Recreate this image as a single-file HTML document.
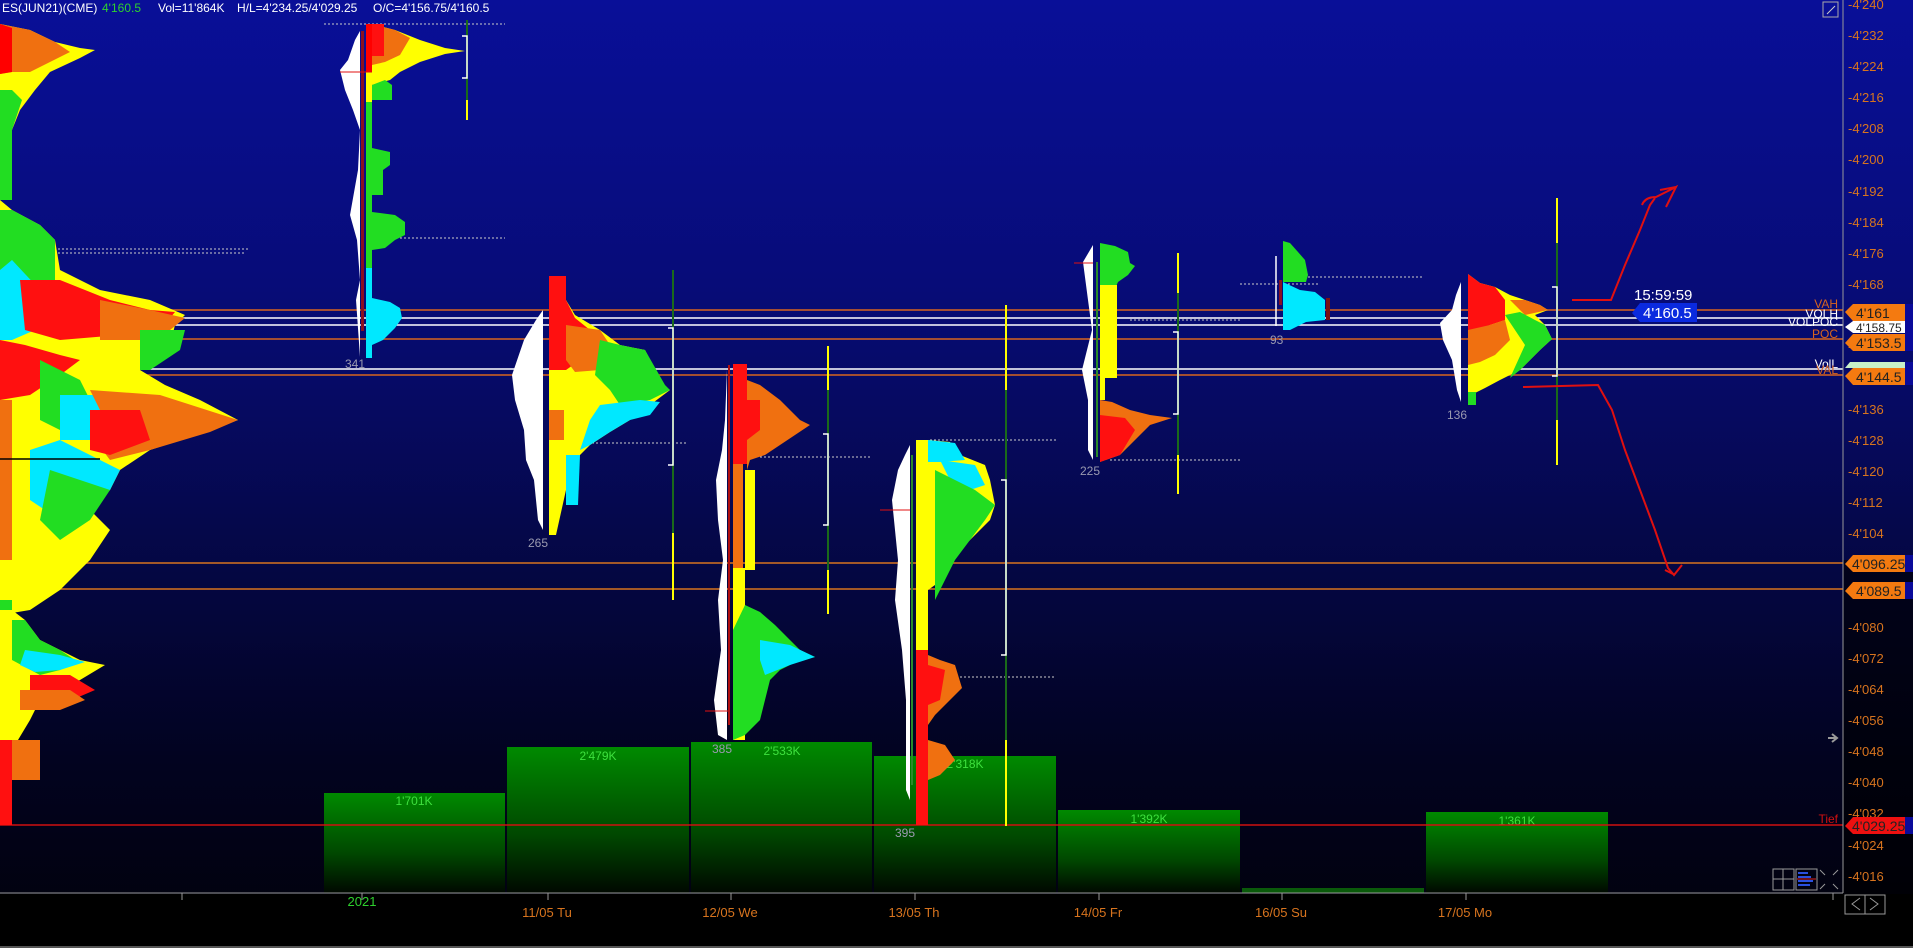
<!DOCTYPE html>
<html><head><meta charset="utf-8"><style>
html,body{margin:0;padding:0;background:#000;}
body{width:1913px;height:948px;overflow:hidden;position:relative;font-family:"Liberation Sans",sans-serif;}
svg{position:absolute;left:0;top:0;}
</style></head><body>
<svg width="1913" height="948" viewBox="0 0 1913 948" font-family="Liberation Sans, sans-serif">
<defs>
<linearGradient id="bg" x1="0" y1="0" x2="0" y2="1">
<stop offset="0" stop-color="#090f98"/><stop offset="0.3" stop-color="#070c78"/><stop offset="0.55" stop-color="#05084c"/><stop offset="0.8" stop-color="#020320"/><stop offset="1" stop-color="#01010a"/>
</linearGradient>
<linearGradient id="vol" x1="0" y1="0" x2="0" y2="1">
<stop offset="0" stop-color="#008a00"/><stop offset="0.6" stop-color="#004800"/><stop offset="1" stop-color="#000800"/>
</linearGradient>
</defs>
<rect width="1913" height="948" fill="url(#bg)"/>
<rect x="1843" y="560" width="70" height="388" fill="#000" opacity="0.6"/>
<rect x="0" y="894" width="1913" height="54" fill="#000"/>

<g fill="url(#vol)">
<rect x="324" y="793" width="181" height="100"/>
<rect x="507" y="747" width="182" height="146"/>
<rect x="691" y="742" width="181" height="151"/>
<rect x="874" y="756" width="182" height="137"/>
<rect x="1058" y="810" width="182" height="83"/>
<rect x="1242" y="888" width="182" height="5" fill="#0a5a0a"/>
<rect x="1426" y="812" width="182" height="81"/>
</g>
<g fill="#3ee03e" font-size="12" text-anchor="middle">
<text x="414" y="805">1'701K</text><text x="598" y="760">2'479K</text><text x="782" y="755">2'533K</text>
<text x="965" y="768">2'318K</text><text x="1149" y="823">1'392K</text><text x="1517" y="825">1'361K</text>
</g>

<g stroke-width="1.5">
<line x1="0" y1="310" x2="1843" y2="310" stroke="#d8641e"/>
<line x1="0" y1="318" x2="1843" y2="318" stroke="#fff"/>
<line x1="0" y1="325" x2="1843" y2="325" stroke="#fff"/>
<line x1="0" y1="339" x2="1843" y2="339" stroke="#d8641e"/>
<line x1="0" y1="369" x2="1843" y2="369" stroke="#fff"/>
<line x1="0" y1="375" x2="1843" y2="375" stroke="#d8641e"/>
<line x1="0" y1="563" x2="1843" y2="563" stroke="#d8741e"/>
<line x1="0" y1="589" x2="1843" y2="589" stroke="#d8741e"/>
<line x1="0" y1="825" x2="1843" y2="825" stroke="#d01010"/>
</g>
<g stroke="#ccc" stroke-dasharray="2 2" stroke-width="1">
<line x1="10" y1="249" x2="250" y2="249"/><line x1="10" y1="253" x2="245" y2="253"/>
<line x1="324" y1="24" x2="505" y2="24"/><line x1="380" y1="238" x2="505" y2="238"/>
<line x1="560" y1="443" x2="688" y2="443"/><line x1="760" y1="457" x2="872" y2="457"/>
<line x1="930" y1="440" x2="1056" y2="440"/><line x1="920" y1="677" x2="1056" y2="677"/>
<line x1="1110" y1="460" x2="1240" y2="460"/><line x1="1130" y1="320" x2="1240" y2="320"/>
<line x1="1300" y1="277" x2="1424" y2="277"/><line x1="1240" y1="284" x2="1320" y2="284"/>
</g>

<!-- Profile A -->
<g>
<polygon points="0,24 30,30 55,42 80,48 95,50 80,58 50,72 35,90 20,110 12,130 12,200 0,200" fill="#ffff00"/>
<polygon points="0,24 30,30 55,42 70,52 50,62 30,72 12,72 0,74" fill="#f07010"/>
<polygon points="0,24 12,28 12,72 0,74" fill="#ff0000"/>
<polygon points="0,90 12,90 22,100 12,130 12,200 0,200" fill="#22dd22"/>
<polygon points="0,200 12,210 40,225 55,240 60,270 100,290 150,300 185,315 175,325 170,345 140,370 165,385 200,400 238,420 210,430 150,450 120,470 110,490 90,510 110,530 90,560 60,590 30,610 0,615" fill="#ffff00"/>
<polygon points="0,210 12,210 40,225 55,240 55,280 40,300 30,320 12,330 0,330" fill="#22dd22"/>
<polygon points="0,270 12,260 40,290 35,330 12,340 0,340" fill="#00e8ff"/>
<polygon points="20,280 60,280 110,300 150,310 175,312 160,330 120,335 60,340 25,330" fill="#ff1010"/>
<polygon points="100,300 150,310 185,318 170,330 150,340 100,340" fill="#f07010"/>
<polygon points="140,330 185,330 180,350 150,370 140,370" fill="#22dd22"/>
<polygon points="0,340 25,345 60,355 80,360 60,375 30,395 0,400" fill="#ff1010"/>
<polygon points="40,360 80,380 90,400 60,430 40,420" fill="#22dd22"/>
<polygon points="60,395 100,395 120,420 90,440 60,440" fill="#00e8ff"/>
<polygon points="90,390 160,395 238,420 210,432 150,450 110,460 95,440 100,410" fill="#f07010"/>
<polygon points="90,410 140,410 150,440 110,455 90,450" fill="#ff1010"/>
<polygon points="30,450 60,440 100,460 120,470 110,490 90,510 60,520 30,500" fill="#00e8ff"/>
<polygon points="50,470 80,480 110,490 90,520 60,540 40,520" fill="#22dd22"/>
<polygon points="0,400 12,400 12,560 0,560" fill="#f07010"/>
<rect x="0" y="600" width="12" height="10" fill="#22dd22"/>
<polygon points="0,610 12,610 25,620 40,640 60,650 80,660 105,665 80,680 60,690 40,700 30,720 15,745 10,793 0,793" fill="#ffff00"/>
<polygon points="12,620 25,620 40,640 60,650 75,660 60,670 40,675 12,660" fill="#22dd22"/>
<polygon points="25,650 60,655 85,662 60,670 35,672 20,665" fill="#00e8ff"/>
<polygon points="30,675 70,675 95,690 60,705 30,705" fill="#ff1010"/>
<polygon points="20,690 70,690 85,700 60,710 20,710" fill="#f07010"/>
<rect x="0" y="740" width="40" height="40" fill="#f07010"/>
<rect x="0" y="740" width="12" height="85" fill="#ff1010"/>
<line x1="0" y1="459" x2="100" y2="459" stroke="#000" stroke-width="1.5"/>
</g>

<!-- Profile B -->
<g>
<polygon points="360,31 355,40 348,60 340,70 345,90 353,110 360,130 358,170 350,215 357,240 360,280 356,300 360,357" fill="#fff"/>
<rect x="361" y="31" width="3" height="300" fill="#8a1020"/>
<rect x="366" y="24" width="6" height="48" fill="#ff0000"/>
<rect x="366" y="72" width="6" height="30" fill="#ffff00"/>
<rect x="366" y="102" width="6" height="166" fill="#22dd22"/>
<rect x="366" y="268" width="6" height="90" fill="#00e8ff"/>
<polygon points="372,24 395,30 420,40 445,48 465,51 445,54 420,62 400,72 390,80 372,85" fill="#ffff00"/>
<polygon points="372,24 395,30 410,38 400,55 385,62 372,65" fill="#f07010"/>
<rect x="372" y="24" width="12" height="32" fill="#ff1010"/>
<polygon points="372,85 385,80 392,85 392,100 380,100 372,100" fill="#22dd22"/>
<polygon points="372,148 390,152 390,165 383,170 383,195 372,195" fill="#22dd22"/>
<polygon points="372,212 395,215 405,222 405,235 395,240 385,248 372,250" fill="#22dd22"/>
<polygon points="372,298 390,302 400,308 402,318 395,328 383,340 372,345" fill="#00e8ff"/>
<line x1="467" y1="20" x2="467" y2="100" stroke="#1a6a1a" stroke-width="2"/>
<line x1="467" y1="100" x2="467" y2="120" stroke="#ffff00" stroke-width="2"/>
<path d="M462 36 H467 V78 H462" stroke="#fff" fill="none" stroke-width="1.5"/>
<line x1="340" y1="72" x2="372" y2="72" stroke="#e01010" stroke-width="1"/>
</g>

<!-- Profile C -->
<g>
<polygon points="543,280 543,530 538,520 534,480 526,460 524,430 515,400 512,375 524,340 536,320 543,310" fill="#fff"/>
<polygon points="549,276 566,276 566,300 575,315 600,330 620,345 645,350 665,388 670,390 650,405 630,420 610,432 590,445 580,455 570,470 566,490 556,535 549,535" fill="#ffff00"/>
<polygon points="549,276 566,276 566,300 575,318 590,330 580,360 566,370 549,370" fill="#ff1010"/>
<polygon points="566,325 600,330 610,345 600,370 575,372 566,360" fill="#f07010"/>
<rect x="549" y="410" width="15" height="30" fill="#f07010"/>
<polygon points="600,340 620,345 645,350 665,385 670,390 650,400 620,405 610,390 595,375" fill="#22dd22"/>
<polygon points="600,405 640,400 660,402 650,415 630,420 610,432 590,445 580,450 590,420" fill="#00e8ff"/>
<polygon points="566,455 580,455 578,505 566,505" fill="#00e8ff"/>
<line x1="673" y1="270" x2="673" y2="533" stroke="#1a6a1a" stroke-width="2"/>
<line x1="673" y1="533" x2="673" y2="600" stroke="#ffff00" stroke-width="2"/>
<path d="M668 328 H673 V465 H668" stroke="#fff" fill="none" stroke-width="1.5"/>
</g>

<!-- Profile D -->
<g>
<polygon points="727,370 727,740 718,735 714,700 721,650 718,600 723,560 718,520 716,480 722,450 725,420" fill="#fff"/>
<rect x="728" y="365" width="2" height="360" fill="#b01010"/>
<rect x="733" y="364" width="14" height="100" fill="#ff1010"/>
<rect x="733" y="464" width="10" height="104" fill="#f07010"/>
<rect x="733" y="568" width="12" height="172" fill="#ffff00"/>
<polygon points="747,380 760,385 780,400 800,420 810,425 795,435 780,445 765,455 750,460 747,470" fill="#f07010"/>
<polygon points="745,400 760,400 760,430 747,440" fill="#ff1010"/>
<rect x="745" y="470" width="10" height="100" fill="#ffff00"/>
<polygon points="733,630 745,605 760,612 775,625 790,640 800,650 815,657 800,660 780,670 770,680 760,720 745,735 733,740" fill="#22dd22"/>
<polygon points="760,640 790,645 815,657 790,665 765,675 760,660" fill="#00e8ff"/>
<line x1="828" y1="346" x2="828" y2="390" stroke="#ffff00" stroke-width="2"/>
<line x1="828" y1="390" x2="828" y2="570" stroke="#1a6a1a" stroke-width="2"/>
<line x1="828" y1="570" x2="828" y2="614" stroke="#ffff00" stroke-width="2"/>
<path d="M823 434 H828 V525 H823" stroke="#fff" fill="none" stroke-width="1.5"/>
<line x1="705" y1="711" x2="728" y2="711" stroke="#e01010"/>
</g>

<!-- Profile E -->
<g>
<polygon points="910,445 910,800 906,790 906,700 902,650 895,600 898,560 892,500 898,470 905,455" fill="#fff"/>
<rect x="911" y="455" width="2" height="330" fill="#2a8a2a"/>
<rect x="916" y="440" width="12" height="375" fill="#ffff00"/>
<polygon points="928,440 950,442 960,455 985,465 990,480 995,505 990,520 965,545 945,565 935,585 928,590" fill="#ffff00"/>
<polygon points="928,440 955,443 965,460 940,462 928,462" fill="#00e8ff"/>
<polygon points="940,460 975,465 985,485 970,490 950,480" fill="#00e8ff"/>
<polygon points="935,470 955,480 975,490 995,505 985,520 970,540 955,560 945,580 935,600" fill="#22dd22"/>
<rect x="916" y="650" width="12" height="175" fill="#ff1010"/>
<polygon points="928,655 940,660 955,665 962,688 950,700 935,715 928,725" fill="#f07010"/>
<polygon points="928,665 945,670 940,700 928,705" fill="#ff1010"/>
<polygon points="928,740 945,745 955,760 940,775 928,780" fill="#f07010"/>
<line x1="1006" y1="305" x2="1006" y2="390" stroke="#ffff00" stroke-width="2"/>
<line x1="1006" y1="390" x2="1006" y2="740" stroke="#1a6a1a" stroke-width="2"/>
<line x1="1006" y1="740" x2="1006" y2="826" stroke="#ffff00" stroke-width="2"/>
<path d="M1001 480 H1006 V655 H1001" stroke="#fff" fill="none" stroke-width="1.5"/>
<line x1="880" y1="510" x2="910" y2="510" stroke="#e01010"/>
</g>

<!-- Profile F -->
<g>
<polygon points="1093,245 1093,460 1088,450 1088,400 1082,370 1092,330 1088,300 1083,262" fill="#fff"/>
<line x1="1074" y1="263" x2="1093" y2="263" stroke="#e01010"/>
<rect x="1096" y="262" width="2" height="195" fill="#2a8a2a"/>
<polygon points="1100,243 1115,246 1128,252 1130,263 1135,266 1128,275 1118,282 1112,296 1100,296" fill="#22dd22"/>
<rect x="1100" y="285" width="17" height="93" fill="#ffff00"/>
<rect x="1100" y="378" width="5" height="22" fill="#ffff00"/>
<polygon points="1100,400 1112,402 1130,410 1150,415 1172,418 1150,425 1135,440 1120,455 1100,462" fill="#f07010"/>
<polygon points="1100,415 1125,418 1135,430 1120,455 1100,462" fill="#ff1010"/>
<line x1="1178" y1="253" x2="1178" y2="293" stroke="#ffff00" stroke-width="2"/>
<line x1="1178" y1="293" x2="1178" y2="455" stroke="#1a6a1a" stroke-width="2"/>
<line x1="1178" y1="455" x2="1178" y2="494" stroke="#ffff00" stroke-width="2"/>
<path d="M1173 332 H1178 V414 H1173" stroke="#fff" fill="none" stroke-width="1.5"/>
</g>

<!-- Profile G -->
<g>
<line x1="1276" y1="256" x2="1276" y2="326" stroke="#fff" stroke-width="1.5"/>
<rect x="1279" y="280" width="3" height="25" fill="#8a1020"/>
<polygon points="1283,241 1290,243 1298,252 1305,260 1308,275 1306,282 1283,282" fill="#22dd22"/>
<polygon points="1283,282 1300,290 1315,292 1325,300 1325,320 1306,322 1290,330 1283,330" fill="#00e8ff"/>
<rect x="1326" y="298" width="4" height="22" fill="#7a1010"/>
</g>

<!-- Profile H -->
<g>
<polygon points="1461,282 1461,402 1457,390 1452,360 1443,340 1440,323 1452,310 1456,295" fill="#fff"/>
<polygon points="1468,274 1480,283 1495,287 1510,295 1525,300 1540,305 1548,310 1535,315 1545,325 1552,339 1540,350 1530,360 1520,370 1500,380 1485,388 1475,393 1468,405" fill="#ffff00"/>
<polygon points="1468,274 1480,283 1495,287 1505,300 1505,320 1490,325 1480,330 1468,330" fill="#ff1010"/>
<polygon points="1468,330 1490,325 1505,320 1510,340 1495,355 1480,362 1468,365" fill="#f07010"/>
<polygon points="1510,300 1525,300 1540,305 1548,310 1525,315" fill="#f07010"/>
<polygon points="1505,315 1520,312 1535,320 1545,325 1552,339 1540,350 1530,360 1520,370 1510,378 1525,345" fill="#22dd22"/>
<rect x="1468" y="392" width="8" height="13" fill="#22dd22"/>
<line x1="1557" y1="198" x2="1557" y2="243" stroke="#ffff00" stroke-width="2"/>
<line x1="1557" y1="243" x2="1557" y2="420" stroke="#1a6a1a" stroke-width="2"/>
<line x1="1557" y1="420" x2="1557" y2="465" stroke="#ffff00" stroke-width="2"/>
<path d="M1552 287 H1557 V376 H1552" stroke="#fff" fill="none" stroke-width="1.5"/>
</g>

<g fill="#9a9ab0" font-size="12">
<text x="345" y="368">341</text><text x="528" y="547">265</text><text x="712" y="753">385</text>
<text x="895" y="837">395</text><text x="1080" y="475">225</text><text x="1270" y="344">93</text><text x="1447" y="419">136</text>
</g>

<g stroke="#e01010" stroke-width="2" fill="none">
<path d="M1572 300 L1611 300 L1625 265 L1640 230 L1650 205 L1655 198"/>
<path d="M1642 205 Q1645 197 1656 197 L1676 187 L1666 207 M1676 187 L1660 190"/>
<path d="M1523 387 L1598 385 L1612 410 L1625 450 L1640 490 L1655 530 L1668 568 L1674 575 L1682 565 M1665 570 L1675 575"/>
</g>

<text x="1634" y="300" fill="#fff" font-size="15">15:59:59</text>
<polygon points="1632,313 1640,303 1697,303 1697,322 1640,322" fill="#0a2adf"/>
<text x="1643" y="318" fill="#fff" font-size="15">4'160.5</text>

<line x1="1843" y1="0" x2="1843" y2="893" stroke="#999" stroke-width="1"/>
<line x1="0" y1="893" x2="1843" y2="893" stroke="#999" stroke-width="1"/>
<g fill="#d8741e" font-size="13">
<text x="1848" y="9">-4'240</text><text x="1848" y="40">-4'232</text><text x="1848" y="71">-4'224</text><text x="1848" y="102">-4'216</text>
<text x="1848" y="133">-4'208</text><text x="1848" y="164">-4'200</text><text x="1848" y="196">-4'192</text><text x="1848" y="227">-4'184</text>
<text x="1848" y="258">-4'176</text><text x="1848" y="289">-4'168</text><text x="1848" y="351">-4'152</text>
<text x="1848" y="414">-4'136</text><text x="1848" y="445">-4'128</text><text x="1848" y="476">-4'120</text><text x="1848" y="507">-4'112</text>
<text x="1848" y="538">-4'104</text><text x="1848" y="632">-4'080</text><text x="1848" y="663">-4'072</text>
<text x="1848" y="694">-4'064</text><text x="1848" y="725">-4'056</text><text x="1848" y="756">-4'048</text><text x="1848" y="787">-4'040</text>
<text x="1848" y="818">-4'032</text><text x="1848" y="850">-4'024</text><text x="1848" y="881">-4'016</text>
</g>
<g font-size="12" text-anchor="end">
<text x="1838" y="308" fill="#d8641e">VAH</text><text x="1838" y="318" fill="#fff">VOLH</text>
<text x="1838" y="326" fill="#fff">VOLPOC</text><text x="1838" y="338" fill="#d8641e">POC</text>
<text x="1838" y="368" fill="#fff">VolL</text><text x="1838" y="374" fill="#d8641e">VAL</text>
<text x="1838" y="823" fill="#d01010">Tief</text>
</g>
<g font-size="14">
<polygon points="1845,312 1853,304 1905,304 1905,321 1853,321" fill="#f47a10"/><text x="1856" y="318" fill="#222">4'161</text>
<polygon points="1845,327 1853,321 1905,321 1905,333 1853,333" fill="#fff"/><text x="1856" y="332" fill="#222" font-size="12">4'158.75</text>
<polygon points="1845,343 1853,334 1905,334 1905,351 1853,351" fill="#f47a10"/><text x="1856" y="348" fill="#222">4'153.5</text>
<polygon points="1845,368 1850,362 1905,362 1905,368" fill="#c8f0c8"/>
<polygon points="1845,376 1853,368 1905,368 1905,385 1853,385" fill="#f47a10"/><text x="1856" y="382" fill="#222">4'144.5</text>
<polygon points="1845,564 1853,555 1905,555 1905,572 1853,572" fill="#f47a10"/><text x="1852" y="569" fill="#222">4'096.25</text>
<polygon points="1845,591 1853,582 1905,582 1905,599 1853,599" fill="#f47a10"/><text x="1856" y="596" fill="#222">4'089.5</text>
<polygon points="1845,826 1853,817 1905,817 1905,834 1853,834" fill="#ee1010"/><text x="1852" y="831" fill="#222">4'029.25</text>
<g fill="#0a0a9a"><rect x="1905" y="304" width="8" height="47"/><rect x="1905" y="362" width="8" height="23"/><rect x="1905" y="555" width="8" height="17"/><rect x="1905" y="582" width="8" height="17"/><rect x="1905" y="817" width="8" height="17"/></g>
</g>
<path d="M1828 738 H1837 M1832 734 L1837 738 L1832 742" stroke="#999" stroke-width="2" fill="none"/>

<g font-size="12" fill="#fff">
<text x="2" y="12">ES(JUN21)(CME)</text><text x="102" y="12" fill="#2ed02e">4'160.5</text>
<text x="158" y="12">Vol=11'864K</text><text x="237" y="12">H/L=4'234.25/4'029.25</text><text x="373" y="12">O/C=4'156.75/4'160.5</text>
</g>
<rect x="1823" y="2" width="15" height="15" fill="none" stroke="#aaa"/>
<path d="M1827 14 L1835 6" stroke="#ccc"/>

<g stroke="#999" fill="none">
<rect x="1773" y="869" width="21" height="21"/><line x1="1783" y1="869" x2="1783" y2="890"/><line x1="1773" y1="879" x2="1794" y2="879"/>
<rect x="1796" y="869" width="21" height="21"/>
<path d="M1820 870 l5 5 M1838 870 l-5 5 M1820 889 l5 -5 M1838 889 l-5 -5"/>
<rect x="1845" y="895" width="20" height="19"/><rect x="1865" y="895" width="20" height="19"/>
<path d="M1860 898 l-8 6 8 6 M1870 898 l8 6 -8 6"/>
</g>
<g fill="#2a50e0"><rect x="1798" y="872" width="10" height="2"/><rect x="1798" y="876" width="13" height="2"/><rect x="1798" y="880" width="15" height="2"/><rect x="1798" y="884" width="12" height="2"/></g>
<line x1="1797" y1="879" x2="1816" y2="879" stroke="#e02020"/>

<g stroke="#999"><line x1="182" y1="893" x2="182" y2="900"/><line x1="362" y1="893" x2="362" y2="900"/><line x1="548" y1="893" x2="548" y2="900"/><line x1="731" y1="893" x2="731" y2="900"/><line x1="915" y1="893" x2="915" y2="900"/><line x1="1099" y1="893" x2="1099" y2="900"/><line x1="1282" y1="893" x2="1282" y2="900"/><line x1="1466" y1="893" x2="1466" y2="900"/><line x1="1833" y1="893" x2="1833" y2="900"/></g>
<g font-size="13" fill="#d8741e" text-anchor="middle">
<text x="362" y="906" fill="#2ed02e">2021</text>
<text x="547" y="917">11/05 Tu</text><text x="730" y="917">12/05 We</text><text x="914" y="917">13/05 Th</text>
<text x="1098" y="917">14/05 Fr</text><text x="1281" y="917">16/05 Su</text><text x="1465" y="917">17/05 Mo</text>
</g>
<rect x="0" y="946" width="1913" height="2" fill="#555"/>
</svg>
</body></html>
